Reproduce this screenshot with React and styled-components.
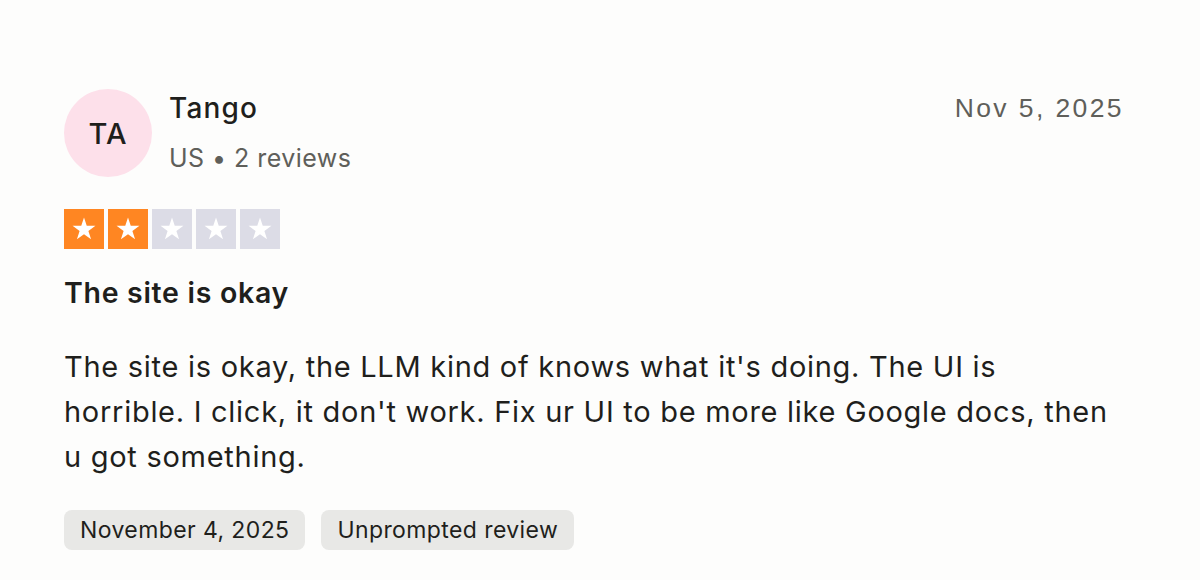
import React from "react";
import styled, { createGlobalStyle } from "styled-components";

const Global = createGlobalStyle`
  html, body { margin: 0; padding: 0; background: #fdfdfc; }
  body { font-family: Inter, "Noto Sans", sans-serif; color: #1f1f1c; }
`;

const Card = styled.article`
  width: 1200px;
  height: 580px;
  box-sizing: border-box;
  padding: 89px 64px 0 64px;
  display: flex;
  flex-direction: column;
`;

const Header = styled.header`
  display: flex;
  align-items: flex-start;
  justify-content: space-between;
  padding-right: 14px;
`;

const User = styled.div`
  display: flex;
  align-items: flex-start;
  gap: 17px;
`;

const Avatar = styled.div`
  width: 88px;
  height: 88px;
  border-radius: 50%;
  background: #fde0ea;
  display: flex;
  align-items: center;
  justify-content: center;
  font-size: 29px;
  font-weight: 500;
  color: #1f1f1c;
  letter-spacing: 1px;
`;

const Meta = styled.div`
  display: flex;
  flex-direction: column;
  gap: 16px;
  margin-top: 1px;
`;

const Name = styled.div`
  font-size: 28px;
  font-weight: 500;
  line-height: 36px;
  letter-spacing: 1.2px;
`;

const Sub = styled.div`
  font-size: 25px;
  line-height: 32px;
  color: #5f5f5a;
  letter-spacing: 0.45px;
`;

const DateText = styled.time`
  font-family: "Liberation Sans", Arial, sans-serif;
  font-size: 26.5px;
  line-height: 36px;
  color: #5f5f5a;
  letter-spacing: 2.4px;
  margin-top: 1px;
  margin-right: -2px;
`;

const Stars = styled.div`
  display: flex;
  gap: 4px;
  margin-top: 32px;
`;

const StarBox = styled.div`
  width: 40px;
  height: 40px;
  background: ${(p) => (p.$on ? "#ff8622" : "#dcdce6")};
  display: flex;
  align-items: center;
  justify-content: center;
`;

const Title = styled.h2`
  margin: 26px 0 0;
  font-size: 28.5px;
  font-weight: 600;
  line-height: 36px;
  letter-spacing: 0.7px;
`;

const Body = styled.p`
  margin: 33px 0 0;
  max-width: 1054px;
  font-size: 29px;
  line-height: 45px;
  letter-spacing: 0.72px;
  color: #1f1f1c;
`;

const Tags = styled.div`
  display: flex;
  gap: 16px;
  margin-top: 31px;
`;

const Tag = styled.span`
  height: 40px;
  padding: 0 16px;
  border-radius: 8px;
  background: #e8e8e6;
  display: flex;
  align-items: center;
  font-size: 23px;
  color: #1f1f1c;
  letter-spacing: 0.4px;
`;

const Star = () => (
  <svg width="28" height="28" viewBox="0 0 24 24">
    <path
      d="M12 2.2l2.35 7.1h7.45l-6.03 4.38 2.3 7.1L12 16.4l-6.07 4.38 2.3-7.1L2.2 9.3h7.45z"
      fill="#fff"
    />
  </svg>
);

export default function App() {
  const rating = 2;
  return (
    <>
      <Global />
      <Card>
        <Header>
          <User>
            <Avatar>TA</Avatar>
            <Meta>
              <Name>Tango</Name>
              <Sub>US • 2 reviews</Sub>
            </Meta>
          </User>
          <DateText>Nov 5, 2025</DateText>
        </Header>
        <Stars>
          {[0, 1, 2, 3, 4].map((i) => (
            <StarBox key={i} $on={i < rating}>
              <Star />
            </StarBox>
          ))}
        </Stars>
        <Title>The site is okay</Title>
        <Body>
          The site is okay, the LLM kind of knows what it's doing. The UI is
          horrible. I click, it don't work. Fix ur UI to be more like Google
          docs, then u got something.
        </Body>
        <Tags>
          <Tag>November 4, 2025</Tag>
          <Tag>Unprompted review</Tag>
        </Tags>
      </Card>
    </>
  );
}
